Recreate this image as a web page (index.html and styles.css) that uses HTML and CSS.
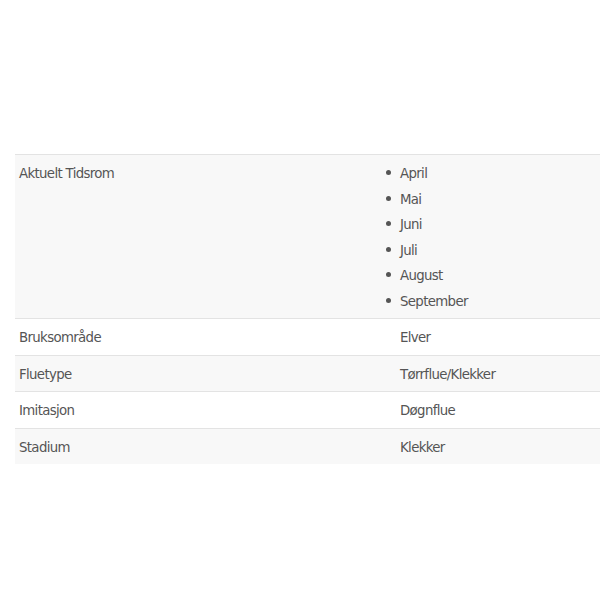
FILE: index.html
```html
<!DOCTYPE html>
<html lang="no">
<head>
<meta charset="utf-8">
<link rel="stylesheet" href="styles.css">
</head>
<body>
<div class="page">
  <table class="specs">
    <tbody>
      <tr class="odd">
        <th>Aktuelt Tidsrom</th>
        <td>
          <ul class="months">
            <li>April</li>
            <li>Mai</li>
            <li>Juni</li>
            <li>Juli</li>
            <li>August</li>
            <li>September</li>
          </ul>
        </td>
      </tr>
      <tr class="even">
        <th>Bruksområde</th>
        <td>Elver</td>
      </tr>
      <tr class="odd">
        <th>Fluetype</th>
        <td>Tørrflue/Klekker</td>
      </tr>
      <tr class="even">
        <th>Imitasjon</th>
        <td>Døgnflue</td>
      </tr>
      <tr class="odd">
        <th>Stadium</th>
        <td>Klekker</td>
      </tr>
    </tbody>
  </table>
</div>
</body>
</html>
```
FILE: styles.css
```css
html, body {
  margin: 0;
  padding: 0;
  background: #ffffff;
}
.page {
  padding: 154px 0 0 15px;
}
.specs {
  width: 585px;
  border-collapse: collapse;
  font-family: "DejaVu Sans Condensed", "DejaVu Sans", sans-serif;
  font-stretch: condensed;
  font-size: 14.8px;
  letter-spacing: -0.65px;
  color: #555555;
}
.specs tr {
  border-top: 1px solid #e3e3e3;
}
.specs tr.odd {
  background: #f8f8f8;
}
.specs tr.even {
  background: #ffffff;
}
.specs th,
.specs td {
  text-align: left;
  font-weight: normal;
  vertical-align: top;
  padding: 5px 4px;
  line-height: 25.5px;
}
.specs th {
  width: 373px;
}
.months {
  margin: 0;
  padding: 0;
  list-style: none;
}
.months li {
  display: flex;
  align-items: center;
  margin-left: -14px;
  gap: 9px;
}
.months li::before {
  content: "";
  width: 5px;
  height: 5px;
  border-radius: 50%;
  background: #555555;
}
```
